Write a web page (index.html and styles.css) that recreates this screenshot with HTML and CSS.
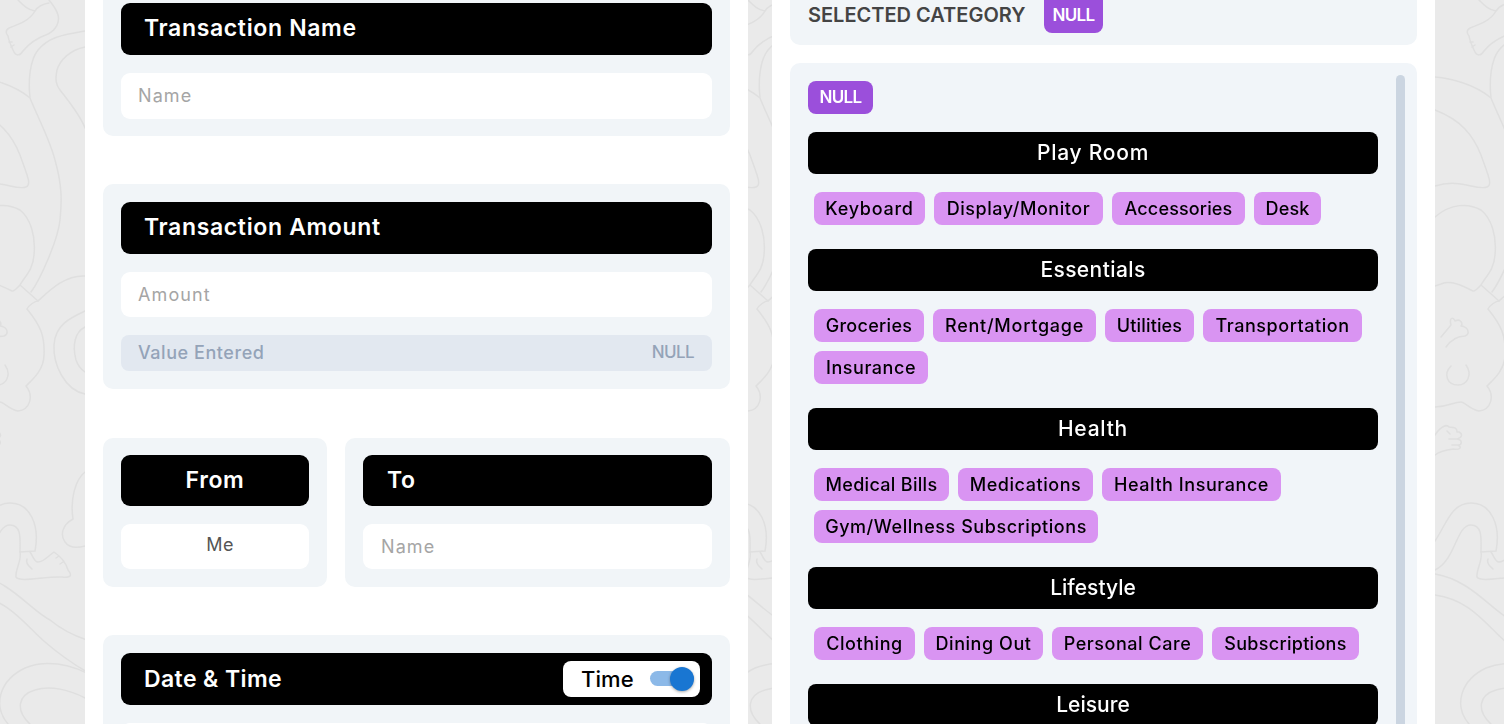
FILE: index.html
```html
<!DOCTYPE html>
<html lang="en">
<head>
<meta charset="utf-8">
<title>New Transaction</title>
<link rel="stylesheet" href="styles.css">
</head>
<body>
<svg class="doodles" viewBox="0 0 1504 724" aria-hidden="true">
  <defs>
    <g id="tile">
      <path d="M18 0C24 6 28 10 35 11C30 20 20 24 9 28C5 30 6 34 8 36C9 42 11 46 14 52C16 56 20 56 23 51C30 42 40 37 48 34C56 30 60 22 58 15C56 8 52 4 49 0M35 11C38 6 43 4 49 3M9 42h3M11 47l3-2"/>
      <path d="M85 31C60 35 48 38 38 50C30 60 28 80 30 98M-26 77C-10 78 15 85 30 98C38 118 50 140 55 160C62 185 62 200 60 220C58 240 40 280 31 292"/>
      <path d="M85 47C70 50 60 60 57 70C55 80 56 85 60 90C70 103 80 115 85 128"/>
      <path d="M-26 110C0 120 12 135 20 155C27 175 32 185 26 187C15 191 0 178-26 186"/>
      <path d="M-26 217C-10 203 8 203 20 210C30 218 36 235 34 255C33 270 25 276 20 285L38 301C50 290 65 275 85 276M20 285C18 287 14 292 12 291C0 285-10 280-20 284L-26 286"/>
      <path d="M38 301C35 301 29 305 27 309C40 325 45 335 44 355C44 370 32 380 26 386C34 396 30 410 18 411C8 409 4 402 0 402C-8 402-10 406-26 407"/>
      <path d="M85 311C70 318 55 325 54 345C53 365 65 390 85 394M85 327C75 332 72 345 76 360C78 366 82 370 85 372"/>
      <path d="M-20 337L-10 325C-12 318-8 316-6 321C0 318 2 324 0 326C8 327 9 334 4 336C-4 336-10 340-15 347M5 365C12 375 6 385-3 385C-14 385-18 374-10 366"/>
      <path d="M-26 435C-20 426-14 424-12 427C-4 427-4 430-4 432L-2 432C2 434 1 438-4 439C2 440 1 445-3 445C2 448-2 450-8 449C-16 450-22 452-26 455M-14 431l3 3M-12 439h8M-9 445h6"/>
      <path d="M-26 541C-15 525-10 503 10 503C30 503 40 525 35 551L20 552C20 540 22 525 10 525C-5 525-5 560-26 570"/>
      <path d="M20 552C22 560 15 570 16 577C20 583 45 576 62 577C72 578 72 575 68 570C66 563 60 556 54 552C48 556 44 562 38 562C34 562 33 556 30 552M27 559C25 564 30 567 32 569M56 558l3-2M60 564l3-2"/>
      <path d="M85 472C75 480 70 500 73 519C62 525 60 535 65 542C70 549 78 548 85 546"/>
      <path d="M-26 574C10 580 30 610 50 620C62 630 72 635 87 640M-26 595C10 600 25 625 45 642C60 655 75 665 87 672"/>
      <path d="M8 724C-8 705 0 680 25 668C45 660 65 663 87 673M30 724C15 710 18 695 35 690C50 685 70 690 85 698"/>
    </g>
  </defs>
  <use href="#tile"/>
  <use href="#tile" x="730"/>
  <use href="#tile" x="1461"/>
</svg>

<main class="page">
  <section class="panel form">
    <div class="card card-first">
      <h2 class="title">Transaction Name</h2>
      <div class="input ph">Name</div>
    </div>
    <div class="card">
      <h2 class="title">Transaction Amount</h2>
      <div class="input ph">Amount</div>
      <div class="value"><span>Value Entered</span><span class="value-null">NULL</span></div>
    </div>
    <div class="parties">
      <div class="card from">
        <h2 class="title">From</h2>
        <div class="input me">Me</div>
      </div>
      <div class="card to">
        <h2 class="title">To</h2>
        <div class="input ph">Name</div>
      </div>
    </div>
    <div class="card card-last">
      <div class="title title-date"><span>Date &amp; Time</span>
        <div class="toggle"><span class="toggle-label">Time</span><span class="switch"><i class="knob"></i></span></div>
      </div>
      <div class="input"></div>
    </div>
  </section>

  <section class="panel categories">
    <div class="selected"><span class="selected-label">SELECTED CATEGORY</span><span class="tag tag-sm">NULL</span></div>
    <div class="list">
      <div class="list-body">
        <span class="tag">NULL</span>
        <h3 class="group loose">Play Room</h3>
        <div class="chips"><span class="chip w111 loose">Keyboard</span><span class="chip w169">Display/Monitor</span><span class="chip w133 tight">Accessories</span><span class="chip w67 tight">Desk</span></div>
        <h3 class="group">Essentials</h3>
        <div class="chips"><span class="chip w110 snug">Groceries</span><span class="chip w163 loose">Rent/Mortgage</span><span class="chip w89 tight">Utilities</span><span class="chip w159">Transportation</span><span class="chip w114">Insurance</span></div>
        <h3 class="group loose">Health</h3>
        <div class="chips"><span class="chip w135 snug">Medical Bills</span><span class="chip w135">Medications</span><span class="chip w179">Health Insurance</span><span class="chip w284">Gym/Wellness Subscriptions</span></div>
        <h3 class="group flat">Lifestyle</h3>
        <div class="chips"><span class="chip w101">Clothing</span><span class="chip w119">Dining Out</span><span class="chip w151">Personal Care</span><span class="chip w147 snug">Subscriptions</span></div>
        <h3 class="group flat">Leisure</h3>
      </div>
      <div class="scrollbar"></div>
    </div>
  </section>
</main>
</body>
</html>
```

FILE: styles.css
```css
* { box-sizing: border-box; }
body { margin: 0; height: 724px; overflow: hidden; background: #eaeaea; font-family: Inter, "Open Sans", sans-serif; color: #000; }
.doodles { position: fixed; inset: 0; width: 1504px; height: 724px; z-index: -1; fill: none; stroke: #dfdfdf; stroke-width: 1.5; stroke-linejoin: round; stroke-linecap: round; }
.page { display: flex; gap: 24px; padding: 0 69px 0 85px; height: 724px; overflow: hidden; }
.panel { width: 663px; height: 724px; padding: 0 18px; background: #fff; overflow: hidden; display: flex; flex-direction: column; flex: none; }
.form { gap: 48px; }
.card { flex: none; background: #f1f5f8; border-radius: 10px; padding: 18px 18px 17.5px; display: flex; flex-direction: column; gap: 18px; }
.card-first { height: 136px; padding-top: 3px; border-radius: 0 0 10px 10px; }
.title { margin: 0; height: 52px; padding: 0 23px; border-radius: 9px; background: #000; color: #fff; font-size: 23px; font-weight: 600; line-height: 50px; letter-spacing: .65px; flex: none; }
.input { height: 45px; padding: 0 17px; border-radius: 9px; background: #fff; font-size: 18px; line-height: 45px; flex: none; letter-spacing: 1.1px; }
.card-first .input { height: 45.5px; }
.ph { color: #a5a5a5; }
.value { height: 36px; padding: 0 18px 0 17px; border-radius: 8px; background: #e2e8f0; color: #94a3b8; font-size: 18px; font-weight: 500; line-height: 35px; letter-spacing: .55px; display: flex; justify-content: space-between; }
.value-null { font-size: 17px; letter-spacing: -.6px; }
.parties { display: flex; gap: 18px; flex: none; margin-top: 1px; }
.parties .card { padding: 17.5px 18px; }
.parties .title { height: 51px; padding: 0 24px; }
.from { width: 224px; text-align: center; }
.to { flex: 1; }
.me { color: #555; line-height: 42px; padding-right: 7px; letter-spacing: .4px; }
.parties .ph { padding-left: 18px; }
.title-date { display: flex; justify-content: space-between; align-items: center; padding-right: 12px; letter-spacing: .4px; }
.toggle { width: 137px; height: 36px; padding: 0 6px 0 18px; border-radius: 8px; background: #fff; color: #000; display: flex; align-items: center; justify-content: space-between; }
.toggle-label { font-size: 22px; font-weight: 500; line-height: 36px; letter-spacing: .1px; }
.switch { width: 44px; height: 15px; border-radius: 8px; background: #8cb9e8; display: flex; align-items: center; justify-content: flex-end; }
.knob { width: 24px; height: 24px; border-radius: 50%; background: #1976d2; box-shadow: 0 1px 3px rgba(0,0,0,.35); flex: none; }

.categories { gap: 18.5px; }
.selected { height: 44.5px; flex: none; padding: 0 18px; border-radius: 0 0 10px 10px; background: #f1f5f8; display: flex; gap: 18px; }
.selected-label { width: 218px; color: #444; font-size: 20px; font-weight: 600; line-height: 30px; white-space: nowrap; }
.tag { display: block; width: 65px; height: 33px; border-radius: 8px; background: #9b4fdb; color: #fff; font-size: 17px; font-weight: 600; line-height: 33px; letter-spacing: -.7px; text-align: center; }
.tag-sm { width: 59px; line-height: 30px; border-radius: 0 0 8px 8px; }
.list { flex: 1; padding: 18px 12px 0 18px; border-radius: 10px 10px 0 0; background: #f1f5f9; display: flex; justify-content: space-between; overflow: hidden; }
.list-body { width: 570px; }
.group { margin: 18px 0; height: 42px; border-radius: 8px; background: #000; color: #fff; text-align: center; font-size: 21px; font-weight: 500; line-height: 41px; letter-spacing: .4px; }
.chips { display: flex; flex-wrap: wrap; gap: 9px; margin: 0 0 24px; padding-left: 6px; }
.chip { height: 33px; border-radius: 8px; background: #d994f2; font-size: 18px; font-weight: 500; line-height: 33px; letter-spacing: .55px; text-align: center; white-space: nowrap; }
.loose { letter-spacing: .75px; }
.snug { letter-spacing: .3px; }
.tight { letter-spacing: .15px; }
.flat { letter-spacing: 0; }
.scrollbar { width: 9px; margin-top: -6px; height: 680px; border-radius: 5px; background: #cbd5e1; flex: none; }
.w67 { width: 67px; } .w89 { width: 89px; } .w101 { width: 101px; } .w110 { width: 110px; } .w111 { width: 111px; }
.w114 { width: 114px; } .w119 { width: 119px; } .w133 { width: 133px; } .w135 { width: 135px; } .w147 { width: 147px; }
.w151 { width: 151px; } .w159 { width: 159px; } .w163 { width: 163px; } .w169 { width: 169px; } .w179 { width: 179px; } .w284 { width: 284px; }
```
